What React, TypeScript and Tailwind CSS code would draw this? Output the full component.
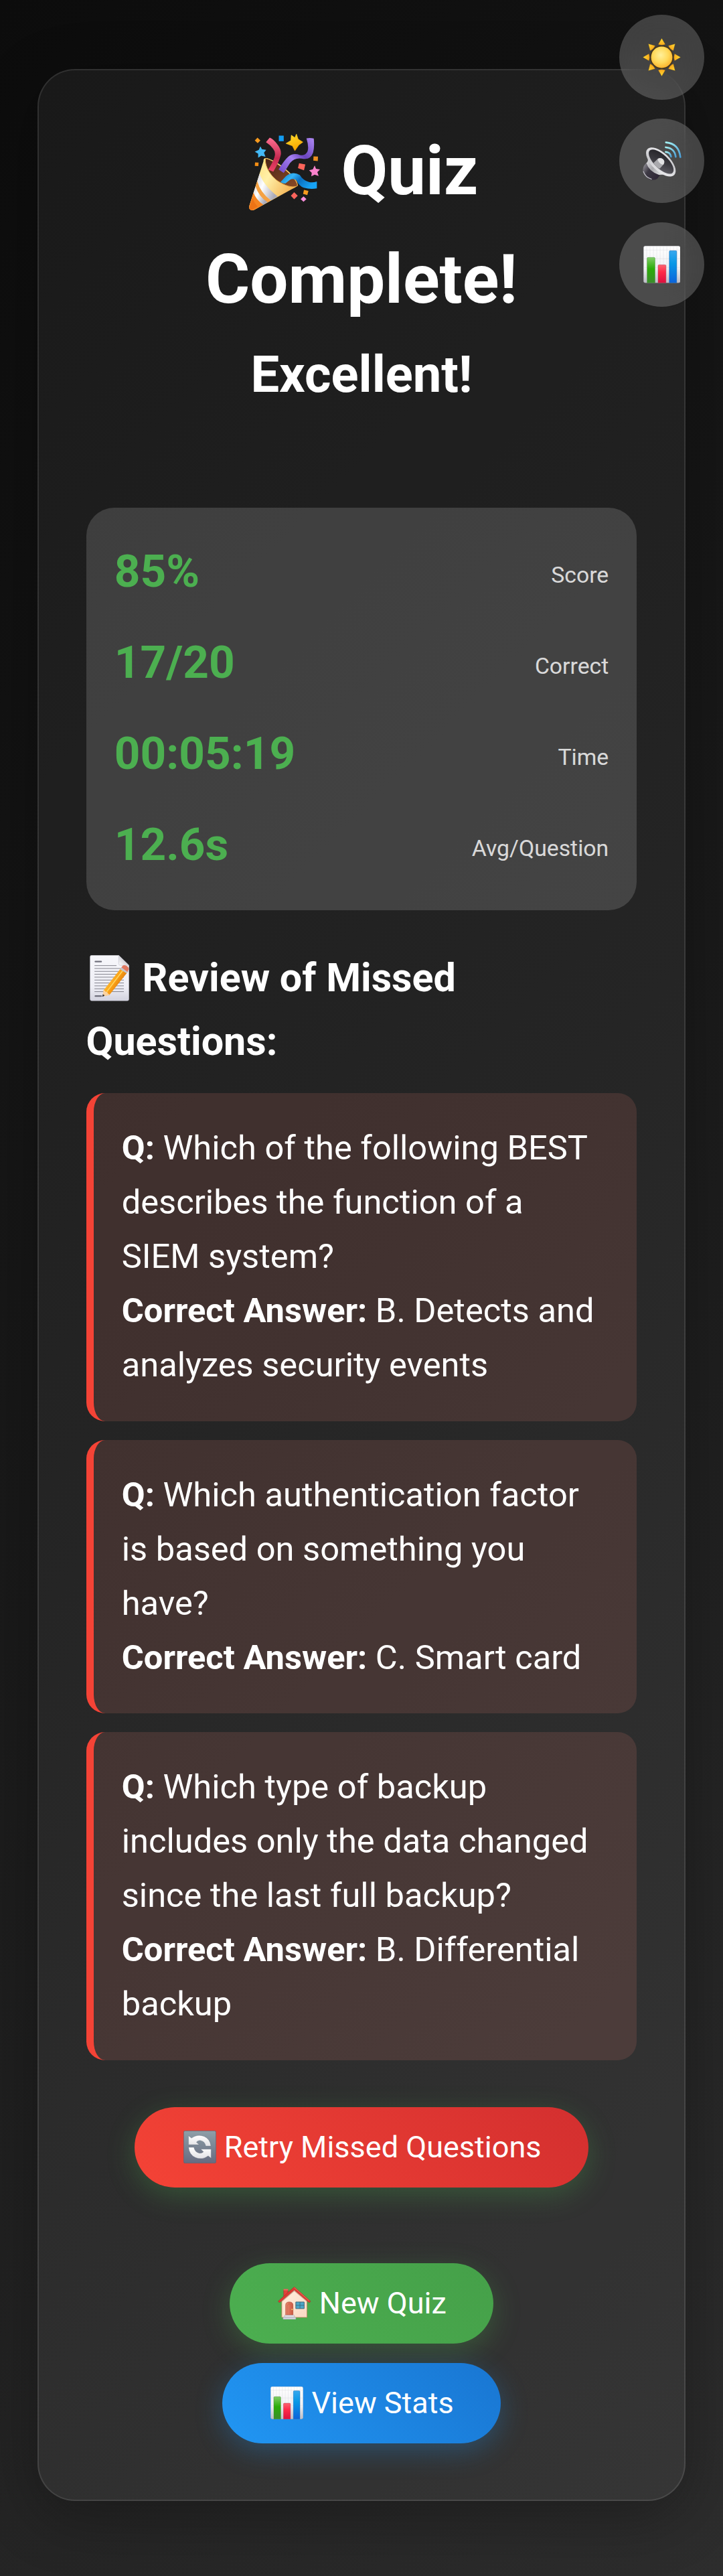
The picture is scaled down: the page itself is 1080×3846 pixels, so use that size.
import type { ReactNode } from 'react';

type IconProps = { className?: string };

function PartyIcon({ className }: IconProps) {
  return (
    <svg viewBox="96 60 322 344" className={className} aria-hidden="true">
      <defs>
        <linearGradient id="coneStripe" x1="0" y1="0" x2="1" y2="0.6">
          <stop offset="0" stopColor="#ffd667" />
          <stop offset="0.45" stopColor="#fff0a8" />
          <stop offset="1" stopColor="#f0a03a" />
        </linearGradient>
        <linearGradient id="coneWhite" x1="0" y1="0" x2="1" y2="0.5">
          <stop offset="0" stopColor="#d5d5dc" />
          <stop offset="0.4" stopColor="#ffffff" />
          <stop offset="1" stopColor="#a9a9b8" />
        </linearGradient>
        <linearGradient id="coneInside" x1="0" y1="0" x2="1" y2="1">
          <stop offset="0" stopColor="#4a2417" />
          <stop offset="1" stopColor="#8a4a26" />
        </linearGradient>
        <linearGradient id="ribbonRed" x1="0" y1="0" x2="0" y2="1">
          <stop offset="0" stopColor="#ff6f92" />
          <stop offset="0.6" stopColor="#c52a50" />
          <stop offset="1" stopColor="#ef4468" />
        </linearGradient>
        <linearGradient id="ribbonPurple" x1="1" y1="0" x2="0" y2="1">
          <stop offset="0" stopColor="#b08af5" />
          <stop offset="0.4" stopColor="#6a45bd" />
          <stop offset="0.6" stopColor="#a580f0" />
          <stop offset="1" stopColor="#7048c8" />
        </linearGradient>
        <linearGradient id="ribbonBlue" x1="0" y1="0" x2="1" y2="0.4">
          <stop offset="0" stopColor="#0f78bd" />
          <stop offset="0.35" stopColor="#35b5f7" />
          <stop offset="0.6" stopColor="#0a6fc0" />
          <stop offset="1" stopColor="#17a3f5" />
        </linearGradient>
        <linearGradient id="starGold" x1="0" y1="0" x2="0.4" y2="1">
          <stop offset="0" stopColor="#ffe12e" />
          <stop offset="1" stopColor="#f9a600" />
        </linearGradient>
        <clipPath id="coneClip">
          <path d="M161 182Q160 166 176 168C206 175 262 210 299 255Q318 278 314 292Q306 300 288 308L120 400Q108 405 100 399Q94 392 98 380Z" />
        </clipPath>
      </defs>
      <g clipPath="url(#coneClip)">
        <path d="M90 160H330V410H90Z" fill="url(#coneStripe)" />
        <path d="M143 236Q160 290 225 340L194 358Q148 325 132 270Z" fill="url(#coneWhite)" />
        <path d="M132 270Q148 325 194 358L178 368Q140 342 124 294Z" fill="#f5a143" />
        <path d="M125 294Q139 340 179 366L160 378Q128 356 114 322Z" fill="url(#coneWhite)" />
        <path d="M115 321Q127 355 160 377L110 410H90V380Z" fill="#f58420" />
        <path d="M112 348Q120 370 134 385L105 404H93Z" fill="#e8680f" opacity=".6" />
      </g>
      <path d="M170 170C198 168 313 252 314 292C300 302 269 297 237 278C197 258 165 205 170 170Z" fill="url(#coneInside)" stroke="#e8b04c" strokeWidth="3" />
      <path d="M172 96L189 76Q207 83 225 108Q242 130 239 153Q232 185 205 229L182 220Q201 191 210 165Q218 143 204 126Q190 107 172 96Z" fill="url(#ribbonRed)" />
      <path d="M354 79Q371 76 387 80Q391 119 384 143Q372 179 333 170Q300 165 280 190Q265 214 252 235L229 219Q254 178 272 162Q294 143 325 154Q350 159 359 138Q366 117 354 79Z" fill="url(#ribbonPurple)" />
      <path d="M237 276L262 249Q293 225 324 244Q340 270 365 275Q382 279 401 273V304Q373 310 342 301Q320 293 309 267Q294 257 279 266L259 282Q247 282 237 276Z" fill="url(#ribbonBlue)" />
      <path d="M309 60L317 83L338 96L320 109L302 135L291 113L262 102L284 89L286 65L302 76Z" fill="url(#starGold)" stroke="url(#starGold)" strokeWidth="2" strokeLinejoin="round" />
      <path d="M147 115L154 128L173 131L163 144L170 162L151 157L137 166L137 148L122 139L140 131Z" fill="#43b9f6" />
      <path d="M391 201L397 216L415 219L403 231L409 248L391 242L376 250L378 234L366 223L383 218Z" fill="#fb83cd" />
      <path d="M230 67H252V92H230Z" fill="#139cf0" />
      <path d="M134 76L147 89L135 101L122 89Z" fill="#f79a1e" />
      <path d="M123 187L139 188L138 204L122 203Z" fill="#f48e14" />
      <path d="M386 160L406 161L405 181L385 179Z" fill="#ee8f20" />
      <path d="M321 191L349 196L343 223L316 213Z" fill="#ff655a" />
      <path d="M299 321L315 337L299 353L284 337Z" fill="#f9645c" />
      <path d="M343 311L363 315L358 334L339 329Z" fill="#f79a1e" />
      <path d="M341 340L354 352L341 364L328 352Z" fill="#fb8ddb" />
    </svg>
  );
}

function SunIcon({ className }: IconProps) {
  const rays = [0, 45, 90, 135, 180, 225, 270, 315];
  return (
    <svg viewBox="0 0 172 172" className={className} aria-hidden="true">
      <defs>
        <radialGradient id="sunCore" cx="0.45" cy="0.4" r="0.6">
          <stop offset="0" stopColor="#fff09a" />
          <stop offset="0.6" stopColor="#ffd95a" />
          <stop offset="1" stopColor="#fbb52f" />
        </radialGradient>
        <linearGradient id="sunRay" x1="0" y1="0" x2="0" y2="1">
          <stop offset="0" stopColor="#ffdc35" />
          <stop offset="1" stopColor="#f9a81b" />
        </linearGradient>
      </defs>
      <circle cx="86" cy="86" r="53" fill="#4b3410" opacity=".75" />
      {rays.map((angle) => (
        <path key={angle} d="M86 1L102 28Q86 34 70 28Z" fill="url(#sunRay)" stroke="#6a4510" strokeOpacity=".5" strokeWidth="1.5" transform={`rotate(${angle} 86 86)`} />
      ))}
      <circle cx="86" cy="86" r="48" fill="url(#sunCore)" />
    </svg>
  );
}

function SpeakerIcon({ className }: IconProps) {
  return (
    <svg viewBox="179 632 175 175" className={className} aria-hidden="true">
      <defs>
        <linearGradient id="spkRing" x1="0" y1="0" x2="1" y2="1">
          <stop offset="0" stopColor="#f2f2f4" />
          <stop offset="0.5" stopColor="#c9c9cd" />
          <stop offset="1" stopColor="#f4f4f6" />
        </linearGradient>
        <linearGradient id="spkCone" x1="0" y1="0" x2="1" y2="1">
          <stop offset="0" stopColor="#1f1e22" />
          <stop offset="0.5" stopColor="#3a393f" />
          <stop offset="1" stopColor="#66656c" />
        </linearGradient>
        <linearGradient id="spkMagnet" x1="0" y1="0.2" x2="1" y2="0.9">
          <stop offset="0" stopColor="#8d8b92" />
          <stop offset="0.35" stopColor="#3c3843" />
          <stop offset="1" stopColor="#2d2435" />
        </linearGradient>
        <linearGradient id="spkBack" x1="0" y1="0" x2="1" y2="0.6">
          <stop offset="0" stopColor="#f0f0f2" />
          <stop offset="0.5" stopColor="#a9a9ad" />
          <stop offset="1" stopColor="#f0f0f2" />
        </linearGradient>
        <linearGradient id="spkWave" x1="0" y1="0" x2="1" y2="1">
          <stop offset="0" stopColor="#a5f2f4" />
          <stop offset="1" stopColor="#4b9ed6" />
        </linearGradient>
      </defs>
      <path d="M185 742Q178 754 181 770Q190 798 218 806Q236 808 245 800L256 786L196 728Z" fill="url(#spkMagnet)" />
      <path d="M182 767Q190 794 220 803" fill="none" stroke="#b9b8bf" strokeWidth="4" />
      <path d="M202 703Q206 720 196 730Q207 767 252 783Q265 782 278 781L300 788L215 680Z" fill="url(#spkBack)" />
      <g transform="rotate(44 261 725)">
        <ellipse cx="261" cy="725" rx="84" ry="41" fill="url(#spkRing)" />
        <ellipse cx="261" cy="723" rx="72" ry="31" fill="url(#spkCone)" />
      </g>
      <path d="M228 729L247 711Q260 703 271 713Q281 723 273 736L256 755Q238 748 228 729Z" fill="#a9a9ad" />
      <path d="M247 711Q260 703 271 713Q281 723 273 736Q263 739 254 728Q246 719 247 711Z" fill="#e2e2e4" />
      <g fill="none" stroke="url(#spkWave)" strokeWidth="8" strokeLinecap="round">
        <path d="M283 680Q303 681 307 701" />
        <path d="M283 659Q323 662 328 702" />
        <path d="M284 637Q342 642 349 703" />
      </g>
    </svg>
  );
}

function ChartIcon({ className }: IconProps) {
  return (
    <svg viewBox="0 0 166 166" className={className} aria-hidden="true">
      <defs>
        <linearGradient id="chPaper" x1="0" y1="0" x2="0" y2="1">
          <stop offset="0" stopColor="#ffffff" />
          <stop offset="0.6" stopColor="#f1f1f4" />
          <stop offset="1" stopColor="#bcbcc6" />
        </linearGradient>
        <linearGradient id="chGreen" x1="0" y1="0" x2="0" y2="1">
          <stop offset="0" stopColor="#80cc67" />
          <stop offset="0.45" stopColor="#2bad08" />
          <stop offset="1" stopColor="#3c8c2d" />
        </linearGradient>
        <linearGradient id="chRed" x1="0" y1="0" x2="0" y2="1">
          <stop offset="0" stopColor="#fb6471" />
          <stop offset="0.4" stopColor="#ff2a48" />
          <stop offset="1" stopColor="#dc103f" />
        </linearGradient>
        <linearGradient id="chBlue" x1="0" y1="0" x2="0" y2="1">
          <stop offset="0" stopColor="#38a8ee" />
          <stop offset="0.4" stopColor="#0897e6" />
          <stop offset="1" stopColor="#0b63db" />
        </linearGradient>
      </defs>
      <rect x="1" y="1" width="164" height="164" rx="8" fill="url(#chPaper)" stroke="#aaaab4" strokeWidth="1" />
      <path d="M15 2V164M30 2V164M45 2V164M60 2V164M75 2V164M90 2V164M105 2V164M120 2V164M135 2V164M150 2V164M2 19H164M2 58H164M2 97H164M2 136H164" stroke="#d6d6de" strokeWidth="1.2" />
      <path d="M17 165V56Q17 52 21 52H48Q52 52 52 56V165Z" fill="url(#chGreen)" stroke="#3b8e2c" strokeWidth="1.5" />
      <path d="M66 165V89Q66 85 70 85H97Q101 85 101 89V165Z" fill="url(#chRed)" stroke="#bd2443" strokeWidth="1.5" />
      <path d="M116 165V26Q116 22 120 22H145Q149 22 149 26V165Z" fill="url(#chBlue)" stroke="#0b67b4" strokeWidth="1.5" />
    </svg>
  );
}

function MemoIcon({ className }: IconProps) {
  return (
    <svg viewBox="42 50 176 206" className={className} aria-hidden="true">
      <defs>
        <linearGradient id="memoPaper" x1="0" y1="0" x2="0" y2="1">
          <stop offset="0" stopColor="#f7f7fb" />
          <stop offset="0.7" stopColor="#eeeef5" />
          <stop offset="1" stopColor="#d2d2de" />
        </linearGradient>
        <linearGradient id="memoPencil" x1="0" y1="0" x2="1" y2="0.7">
          <stop offset="0.3" stopColor="#ffc23c" />
          <stop offset="0.55" stopColor="#fba116" />
          <stop offset="0.8" stopColor="#db7a10" />
        </linearGradient>
        <linearGradient id="memoFold" x1="0" y1="1" x2="1" y2="0">
          <stop offset="0" stopColor="#ffffff" />
          <stop offset="1" stopColor="#a5a5b2" />
        </linearGradient>
      </defs>
      <path d="M50 51H172L218 96V248Q218 255 211 255H50Q43 255 43 248V58Q43 51 50 51Z" fill="url(#memoPaper)" stroke="#bdbdc8" strokeWidth="1" />
      <path d="M172 51L218 96H180Q172 96 172 88Z" fill="url(#memoFold)" stroke="#b4b4c0" strokeWidth="1.5" />
      <path d="M63 97H162M63 110H195M63 123H195M63 136H195M63 149H195M63 162H195M63 175H195M63 188H195M63 201H195M63 214H195" stroke="#74747e" strokeWidth="2.6" />
      <path d="M67 79H93M67 234H93" stroke="#70707c" strokeWidth="7" strokeLinecap="round" />
      <path d="M102 234L104 208L180 111L209 130L130 229Z" fill="url(#memoPencil)" />
      <path d="M118 215L189 121" stroke="#ffd45c" strokeWidth="5" />
      <path d="M99 236L104 207Q110 208 113 215Q122 214 123 223Q130 223 131 228Z" fill="#fbd3a0" />
      <path d="M98 237L100 227Q107 226 108 233Z" fill="#33333c" />
      <path d="M178 114L185 104L216 122L208 132Z" fill="#c4c4c9" />
      <path d="M184 105L190 97Q197 93 208 99Q219 107 217 114L211 125Z" fill="#e07860" />
    </svg>
  );
}

function RetryIcon({ className }: IconProps) {
  return (
    <svg viewBox="70 67 147 147" className={className} aria-hidden="true">
      <defs>
        <linearGradient id="rtTile" x1="0" y1="0" x2="0" y2="1">
          <stop offset="0" stopColor="#8e9fa8" />
          <stop offset="1" stopColor="#666b80" />
        </linearGradient>
        <linearGradient id="rtArrow" x1="0" y1="0" x2="0" y2="1">
          <stop offset="0" stopColor="#ffffff" />
          <stop offset="1" stopColor="#e2e2e6" />
        </linearGradient>
      </defs>
      <rect x="71" y="68" width="145" height="145" rx="7" fill="url(#rtTile)" stroke="#6d5f6b" strokeWidth="2.5" />
      <path d="M93 90L106 101Q133 81 163 93Q190 105 193 136H170Q166 114 145 111Q134 110 128 119L140 130H93Z" fill="url(#rtArrow)" stroke="#5c6573" strokeOpacity=".5" strokeWidth="1.5" />
      <path d="M194 191L181 180Q154 200 124 188Q96 176 93 142H117Q121 164 141 168Q153 170 160 162L148 150H194Z" fill="url(#rtArrow)" stroke="#4c5363" strokeOpacity=".5" strokeWidth="1.5" />
    </svg>
  );
}

function HouseIcon({ className }: IconProps) {
  return (
    <svg viewBox="104 74 149 151" className={className} aria-hidden="true">
      <defs>
        <linearGradient id="hsWall" x1="0" y1="0" x2="1" y2="1">
          <stop offset="0" stopColor="#fff0dc" />
          <stop offset="1" stopColor="#fbd8c4" />
        </linearGradient>
        <linearGradient id="hsDoor" x1="0" y1="0" x2="1" y2="0">
          <stop offset="0" stopColor="#e88a70" />
          <stop offset="1" stopColor="#cf5a44" />
        </linearGradient>
      </defs>
      <path d="M130 87H149V112L130 126Z" fill="#e0433c" stroke="#a92c27" strokeWidth="2" />
      <path d="M129 85H150V91H129Z" fill="#ee6a5e" />
      <path d="M121 136L178 86L236 136V214H121Z" fill="url(#hsWall)" stroke="#b98259" strokeWidth="2.5" />
      <path d="M122 140L178 92L236 140" fill="none" stroke="#a86a50" strokeOpacity=".5" strokeWidth="5" />
      <path d="M178 75L252 140Q251 146 245 146L178 89L112 146Q106 146 105 140Z" fill="#dc3b32" stroke="#a52822" strokeWidth="1.5" />
      <path d="M178 78L246 138" stroke="#f27a68" strokeWidth="2.5" />
      <path d="M139 205V158Q139 144 155 144Q172 144 172 158V205Z" fill="url(#hsDoor)" stroke="#b5503b" strokeWidth="2.5" />
      <path d="M146 202V163Q147 152 155 152Q164 152 165 163V202Z" fill="none" stroke="#c4624d" strokeWidth="2" />
      <circle cx="168" cy="178" r="3" fill="#ffd263" />
      <path d="M185 144H223V174H185Z" fill="#4aa6c8" stroke="#3c6678" strokeWidth="3" />
      <path d="M204 144V174M185 159H223" stroke="#3c6678" strokeWidth="2.5" />
      <path d="M134 204H178V212H134Z" fill="#ececf2" stroke="#9b9bab" strokeWidth="1.5" />
      <path d="M127 213H185V223H127Z" fill="#d5d5df" stroke="#9b9bab" strokeWidth="1.5" />
    </svg>
  );
}

function RoundButton({ label, children }: { label: string; children: ReactNode }) {
  return (
    <button aria-label={label} className="flex size-[126.6px] items-center justify-center rounded-full bg-white/20 backdrop-blur-[28px]">
      {children}
    </button>
  );
}

const stats = [
  { value: '85%', label: 'Score' },
  { value: '17/20', label: 'Correct' },
  { value: '00:05:19', label: 'Time' },
  { value: '12.6s', label: 'Avg/Question' },
];

const missed = [
  { question: 'Which of the following BEST describes the function of a SIEM system?', answer: 'B. Detects and analyzes security events' },
  { question: 'Which authentication factor is based on something you have?', answer: 'C. Smart card' },
  { question: 'Which type of backup includes only the data changed since the last full backup?', answer: 'B. Differential backup' },
];

export default function App() {
  return (
    <div className="relative h-[3846px] w-[1080px] overflow-hidden bg-[linear-gradient(135deg,#0c0c0c_0%,#1a1a1a_50%,#2d2d2d_100%)] px-[56.25px] pt-[103px] font-['Roboto',sans-serif] text-white">
      <main className="h-[3631px] rounded-[56px] border-2 border-white/10 bg-white/5 px-[70.3px] pt-[69.5px] shadow-[0_22px_90px_rgba(0,0,0,0.3)]">
        <header className="text-center">
          <h1 className="text-[101.25px] leading-[162px] font-bold">
            <PartyIcon className="mr-[5.5px] ml-[6px] inline-block h-[114.7px] w-[107px] align-[-25px]" /> Quiz
            <br />
            Complete!
          </h1>
          <h2 className="text-[75.94px] leading-[121.5px] font-bold">Excellent!</h2>
        </header>

        <section className="mt-[138px] flex h-[600.5px] flex-col gap-[28.125px] rounded-[42px] bg-white/15 p-[42.2px]">
          {stats.map((stat) => (
            <div key={stat.label} className="flex h-[108px] items-start justify-between">
              <span className="text-[67.5px] leading-[106px] font-bold text-[#4caf50]">{stat.value}</span>
              <span className="mt-8 text-[33.75px] leading-[54px] text-white/80">{stat.label}</span>
            </div>
          ))}
        </section>

        <section className="mt-[54.7px]">
          <h3 className="text-[59.23px] leading-[94.77px] font-bold">
            <MemoIcon className="mr-[5px] ml-[5.4px] inline-block h-[68.5px] w-[58.8px] align-[-14.5px]" /> Review of Missed
            <br />
            Questions:
          </h3>
          <div className="mt-[29.4px] flex flex-col gap-[28.125px]">
            {missed.map((item) => (
              <article
                key={item.question}
                className="rounded-[28px] border-l-[11px] border-[#f44336] bg-[rgba(244,128,116,0.147)] pt-[41px] pr-[42.2px] pb-[43.4px] pl-[42.2px] text-[50.625px] leading-[81px]"
              >
                <p>
                  <strong className="font-bold">Q:</strong> {item.question}
                </p>
                <p>
                  <strong className="font-bold">Correct Answer:</strong> {item.answer}
                </p>
              </article>
            ))}
          </div>
        </section>

        <div className="mt-[70.4px] flex flex-col items-center text-[45px] leading-[53px]">
          <button className="flex h-[120px] items-center rounded-full bg-[linear-gradient(45deg,#f44336,#d32f2f)] px-[70.3px] shadow-[0_11px_42px_rgba(76,175,80,0.3)]">
            <RetryIcon className="mr-[12.2px] ml-[2px] size-[49px]" />
            Retry Missed Questions
          </button>
          <button className="mt-[112.8px] flex h-[120px] items-center rounded-full bg-[linear-gradient(45deg,#4caf50,#45a049)] px-[70.3px] shadow-[0_11px_42px_rgba(76,175,80,0.3)]">
            <HouseIcon className="mr-[12.2px] ml-[2px] size-[49.5px]" />
            New Quiz
          </button>
          <button className="mt-[28.8px] flex h-[120px] items-center rounded-full bg-[linear-gradient(45deg,#2196f3,#1976d2)] px-[70.3px] shadow-[0_11px_42px_rgba(33,150,243,0.3)]">
            <ChartIcon className="mr-[12.2px] ml-[2px] size-[49px]" />
            View Stats
          </button>
        </div>
      </main>

      <nav className="absolute top-[22.2px] right-[28.1px] flex flex-col gap-[28.1px]">
        <RoundButton label="Toggle theme">
          <SunIcon className="size-[57px]" />
        </RoundButton>
        <RoundButton label="Toggle sound">
          <SpeakerIcon className="size-[58px]" />
        </RoundButton>
        <RoundButton label="Statistics">
          <ChartIcon className="size-[55.5px]" />
        </RoundButton>
      </nav>
    </div>
  );
}
